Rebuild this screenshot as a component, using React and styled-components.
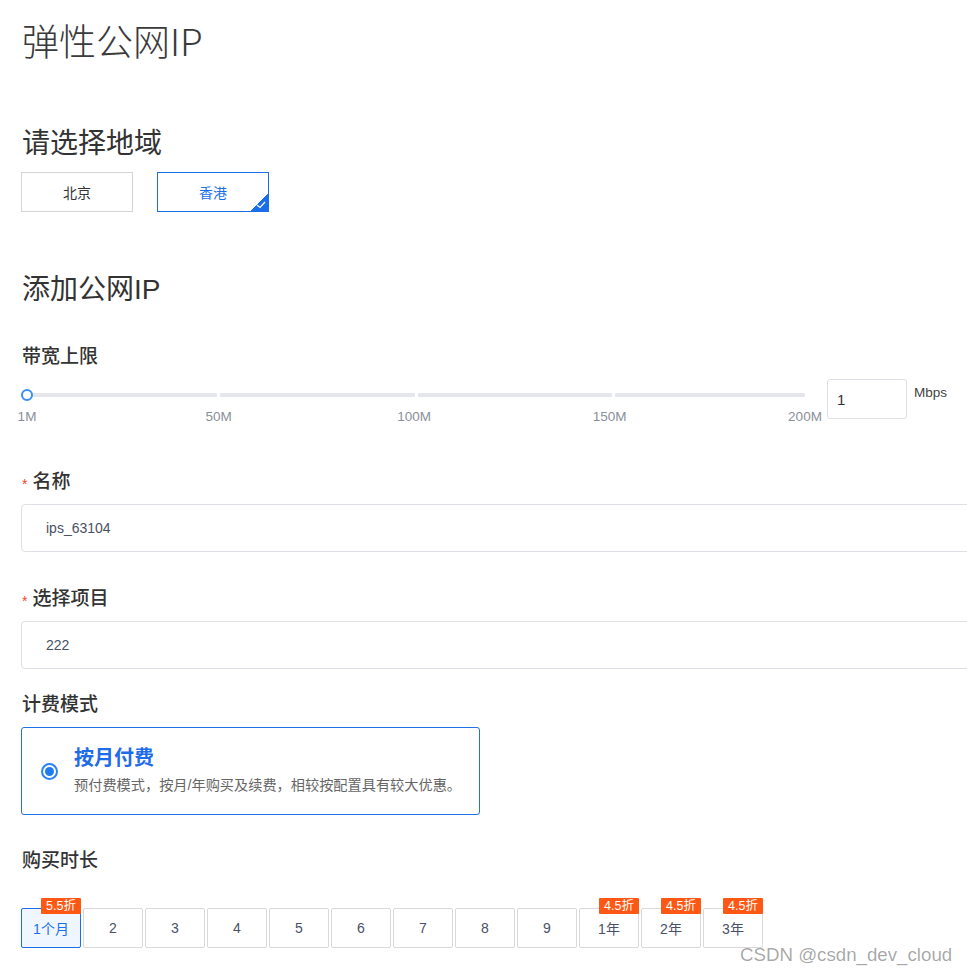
import React from "react";
import styled, { createGlobalStyle } from "styled-components";

const Global = createGlobalStyle`
  html, body { margin: 0; padding: 0; background: #fff; overflow: hidden; }
  body { font-family: "Liberation Sans", "Noto Sans CJK SC", sans-serif; color: #333; }
  * { box-sizing: border-box; }
`;

const Page = styled.div`
  position: relative;
  width: 967px;
  height: 975px;
  overflow: hidden;
  padding: 16px 0 0 21px;
`;

const Title = styled.h1`
  margin: 0;
  font-family: "Noto Sans CJK SC", "Noto Sans", sans-serif;
  font-size: 37px;
  line-height: 48px;
  font-weight: 300;
  color: #3a3a3a;
  padding-left: 1px;
`;

const SectionTitle = styled.h2`
  margin: ${(p) => p.$mt}px 0 0;
  font-size: 28px;
  line-height: 36px;
  font-weight: 400;
  color: #333;
  padding-left: 1px;
`;

const RegionRow = styled.div`
  display: flex;
  gap: 24px;
  margin-top: 10px;
`;

const RegionBtn = styled.div`
  position: relative;
  width: 112px;
  height: 40px;
  display: flex;
  align-items: center;
  justify-content: center;
  font-size: 14px;
  border: 1px solid ${(p) => (p.$active ? "#1a6fe8" : "#d4d4d4")};
  color: ${(p) => (p.$active ? "#1a6fe8" : "#333")};
  overflow: hidden;
`;

const Corner = styled.span`
  position: absolute;
  right: 0;
  bottom: 0;
  width: 18px;
  height: 18px;
  background: linear-gradient(135deg, transparent 50%, #1a6fe8 50%);
  display: flex;
  align-items: flex-end;
  justify-content: flex-end;
`;

const Label = styled.div`
  margin-top: ${(p) => p.$mt}px;
  font-size: 19px;
  line-height: 26px;
  font-weight: 500;
  color: #333;
  display: flex;
  align-items: center;
  padding-left: 1px;
`;

const Star = styled.span`
  color: #f5452e;
  font-size: 14px;
  margin-right: 5px;
  position: relative;
  top: 2px;
`;

const SliderRow = styled.div`
  display: flex;
  align-items: flex-start;
  margin-top: 9px;
`;

const Slider = styled.div`
  position: relative;
  width: 790px;
  height: 40px;
  padding: 14px 6px 0;
`;

const Track = styled.div`
  display: flex;
  gap: 3px;
  height: 4px;
`;

const Segment = styled.div`
  flex: ${(p) => p.$grow} 1 0;
  background: #e4e6eb;
  border-radius: 1px;
`;

const Thumb = styled.div`
  position: absolute;
  left: 0;
  top: 10px;
  width: 12px;
  height: 12px;
  border-radius: 50%;
  border: 2px solid #3b8ff0;
  background: #fff;
`;

const TickLabels = styled.div`
  position: relative;
  height: 16px;
  margin-top: 12px;
`;

const Tick = styled.span`
  position: absolute;
  top: 0;
  transform: translateX(-50%);
  font-size: 13.5px;
  line-height: 16px;
  color: #8a8f99;
  white-space: nowrap;
`;

const NumInput = styled.div`
  width: 80px;
  height: 40px;
  margin-left: 16px;
  border: 1px solid #dcdfe6;
  border-radius: 3px;
  padding-left: 9px;
  display: flex;
  align-items: center;
  font-size: 15px;
  color: #333;
`;

const Unit = styled.span`
  margin-left: 7px;
  font-size: 13.5px;
  line-height: 28px;
  color: #444;
`;

const TextInput = styled.div`
  margin-top: 9px;
  width: 1000px;
  height: 48px;
  border: 1px solid #dcdfe6;
  border-radius: 4px;
  padding-left: 24px;
  display: flex;
  align-items: center;
  font-size: 14px;
  color: #4a5064;
`;

const PlanCard = styled.div`
  margin-top: 9px;
  width: 459px;
  height: 88px;
  border: 1px solid #1f72e8;
  border-radius: 3px;
  display: flex;
  align-items: center;
  padding-left: 19px;
`;

const Radio = styled.span`
  width: 17px;
  height: 17px;
  border-radius: 50%;
  border: 2px solid #2a83f0;
  display: flex;
  align-items: center;
  justify-content: center;
  flex-shrink: 0;
  &::after {
    content: "";
    width: 9px;
    height: 9px;
    border-radius: 50%;
    background: #1f7cf0;
  }
`;

const PlanText = styled.div`
  margin-left: 16px;
  display: flex;
  flex-direction: column;
`;

const PlanTitle = styled.div`
  font-size: 20px;
  line-height: 26px;
  font-weight: 700;
  color: #1f6ce8;
  margin-top: -2px;
`;

const PlanDesc = styled.div`
  margin-top: 4px;
  font-size: 14.2px;
  line-height: 20px;
  color: #666;
`;

const DurationRow = styled.div`
  display: flex;
  gap: 2px;
  margin-top: 34px;
`;

const DurationBtn = styled.div`
  position: relative;
  width: 60px;
  height: 40px;
  border: 1px solid ${(p) => (p.$active ? "#1a6fe8" : "#d9d9d9")};
  background: ${(p) => (p.$active ? "#f0f6ff" : "#fff")};
  color: ${(p) => (p.$active ? "#1a6fe8" : "#4a5068")};
  border-radius: 2px;
  display: flex;
  align-items: center;
  justify-content: center;
  font-size: 14px;
`;

const Badge = styled.span`
  position: absolute;
  top: -11px;
  right: -1px;
  height: 16px;
  padding: 0 5px;
  background: #ff5714;
  color: #fff;
  font-size: 12.5px;
  line-height: 16px;
  border-radius: 1px;
  white-space: nowrap;
`;

const Watermark = styled.div`
  position: absolute;
  left: 740px;
  top: 943px;
  font-size: 18.7px;
  line-height: 24px;
  color: rgba(0, 0, 0, 0.36);
  white-space: nowrap;
`;

const ticks = [
  { label: "1M", v: 1 },
  { label: "50M", v: 50 },
  { label: "100M", v: 100 },
  { label: "150M", v: 150 },
  { label: "200M", v: 200 },
];

const durations = [
  { label: "1个月", badge: "5.5折", active: true },
  { label: "2" },
  { label: "3" },
  { label: "4" },
  { label: "5" },
  { label: "6" },
  { label: "7" },
  { label: "8" },
  { label: "9" },
  { label: "1年", badge: "4.5折" },
  { label: "2年", badge: "4.5折" },
  { label: "3年", badge: "4.5折" },
];

export default function App() {
  return (
    <>
      <Global />
      <Page>
        <Title>弹性公网IP</Title>

        <SectionTitle $mt={62}>请选择地域</SectionTitle>
        <RegionRow>
          <RegionBtn>北京</RegionBtn>
          <RegionBtn $active>
            香港
            <Corner>
              <svg width="10" height="8" viewBox="0 0 10 8" style={{ marginRight: 2, marginBottom: 2 }}>
                <path d="M1 4 L4 6.5 L9 1" fill="none" stroke="#fff" strokeWidth="1.2" />
              </svg>
            </Corner>
          </RegionBtn>
        </RegionRow>

        <SectionTitle $mt={60}>添加公网IP</SectionTitle>

        <Label $mt={36}>带宽上限</Label>
        <SliderRow>
          <Slider>
            <Track>
              <Segment $grow={49} />
              <Segment $grow={50} />
              <Segment $grow={50} />
              <Segment $grow={49} />
            </Track>
            <Thumb />
            <TickLabels>
              {ticks.map((t) => (
                <Tick key={t.label} style={{ left: `${((t.v - 1) / 199) * 100}%` }}>
                  {t.label}
                </Tick>
              ))}
            </TickLabels>
          </Slider>
          <NumInput>1</NumInput>
          <Unit>Mbps</Unit>
        </SliderRow>

        <Label $mt={50}>
          <Star>*</Star>名称
        </Label>
        <TextInput>ips_63104</TextInput>

        <Label $mt={34}>
          <Star>*</Star>选择项目
        </Label>
        <TextInput>222</TextInput>

        <Label $mt={23}>计费模式</Label>
        <PlanCard>
          <Radio />
          <PlanText>
            <PlanTitle>按月付费</PlanTitle>
            <PlanDesc>预付费模式，按月/年购买及续费，相较按配置具有较大优惠。</PlanDesc>
          </PlanText>
        </PlanCard>

        <Label $mt={33}>购买时长</Label>
        <DurationRow>
          {durations.map((d) => (
            <DurationBtn key={d.label} $active={d.active}>
              {d.label}
              {d.badge && <Badge>{d.badge}</Badge>}
            </DurationBtn>
          ))}
        </DurationRow>

        <Watermark>CSDN @csdn_dev_cloud</Watermark>
      </Page>
    </>
  );
}
